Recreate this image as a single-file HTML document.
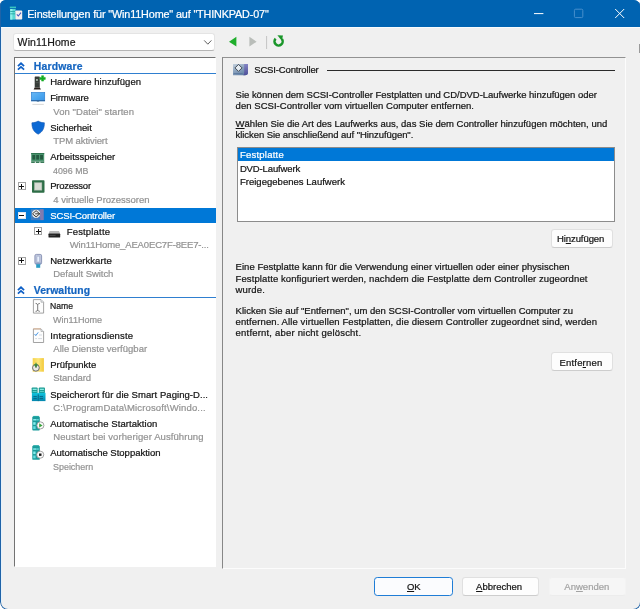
<!DOCTYPE html>
<html><head><meta charset="utf-8"><title>Einstellungen</title>
<style>
html,body{margin:0;padding:0;background:#fff;}
body{width:640px;height:609px;overflow:hidden;font-family:"Liberation Sans",sans-serif;}
#win{position:absolute;left:0;top:0;width:640.5px;height:610px;background:#f0f0f0;border-radius:5.5px 7.5px 8px 8px;overflow:hidden;}
#win>*{position:absolute;}
.t{position:absolute;white-space:pre;line-height:12px;-webkit-text-stroke:0.22px;font-family:"Liberation Sans",sans-serif;}
.t u{text-decoration:underline;text-underline-offset:1px;text-decoration-thickness:0.8px;}
#tb{left:0;top:0;width:640px;height:27.4px;background:#0063b1;}
#tbl{left:0;top:27.4px;width:640px;height:1px;background:#f8fbfd;}
#lb{left:0;top:0;width:640.5px;height:610px;box-sizing:border-box;border:1px solid #1f63a8;border-top-color:#0063b1;border-radius:5.5px 7.5px 8px 8px;z-index:5;}
#lb2{left:1px;top:28px;width:1px;height:574px;background:#e6f2fb;z-index:5;}
#combo{left:13.4px;top:32.6px;width:201.8px;height:18.6px;box-sizing:border-box;background:#fff;border:1px solid #e4e4e4;border-bottom-color:#b5b5b5;border-radius:3px;}
#tree{left:13.6px;top:57.2px;width:202.6px;height:509.6px;box-sizing:border-box;background:#fff;border-left:1.3px solid #737373;border-top:1.3px solid #737373;border-right:1px solid #fff;border-bottom:1px solid #fff;}
.hl{left:15px;width:200.8px;height:1.1px;background:#2f7fd0;}
#sel{left:15px;top:207.7px;width:200.8px;height:15.6px;background:#0078d7;}
#panel{left:222.2px;top:57.2px;width:404.2px;height:511.8px;box-sizing:border-box;border-left:1.4px solid #878787;border-top:1.5px solid #929292;border-right:1.2px solid #fcfcfc;border-bottom:1.2px solid #fcfcfc;}
#hline{left:327.4px;top:70.2px;width:287.6px;height:1.1px;background:#2a2a2a;}
#list{left:236.6px;top:146.6px;width:378.6px;height:75px;box-sizing:border-box;background:#fff;border:1.1px solid #8c8c8c;}
#lsel{left:237.8px;top:148px;width:376.2px;height:13.2px;background:#0078d7;}
.btn{box-sizing:border-box;background:#fdfdfd;border:1px solid #e0e0e0;border-bottom-color:#cdcdcd;border-radius:3.3px;}
#bok{border:1.25px solid #1f7dd6;background:#fbfcfe;}
#bapp{background:#f6f6f6;border-color:#f0f0f0 #f3f3f3 #ececec #f3f3f3;}
.pm{box-sizing:border-box;width:7.7px;height:7.7px;background:#fff;border:1px solid #a2a2a2;}
.pm i{position:absolute;background:#111;}
.pm i.h{left:0.4px;top:2.4px;width:5px;height:1.05px;}
.pm i.v{left:2.4px;top:0.4px;width:1.05px;height:5px;}
#txt{left:0;top:0;width:640px;height:609px;will-change:transform;}

</style></head>
<body>
<div id="win">
<div id="tb"></div><div id="tbl"></div><div id="lb"></div><div id="lb2"></div>
<!-- title icon -->
<svg id="ticon" style="left:8.6px;top:5.6px" width="14" height="15" viewBox="0 0 14 15">
 <rect x="0.8" y="0.6" width="6.2" height="1.6" fill="#39c6c0"/>
 <rect x="1.2" y="3" width="5.4" height="10.6" fill="#55d8d2"/>
 <rect x="1.2" y="3" width="2.2" height="10.6" fill="#8ff0ea"/>
 <rect x="1.2" y="5" width="5.4" height="0.9" fill="#2aa8a6"/>
 <rect x="1.2" y="7.4" width="5.4" height="0.9" fill="#2aa8a6"/>
 <rect x="6.4" y="4.4" width="6.8" height="9.2" rx="0.8" fill="#f6f0ee"/>
 <path d="M7.8 8.4 L9.3 10 L12 6.6" stroke="#4a5fc0" stroke-width="1.1" fill="none"/>
</svg>
<!-- caption buttons -->
<svg style="left:530px;top:5px" width="100" height="18" viewBox="0 0 100 18">
 <path d="M4 8.6 H13.4" stroke="#fff" stroke-width="1"/>
 <rect x="44.4" y="4.2" width="8.4" height="8.4" rx="1.2" fill="none" stroke="#4f94cf" stroke-width="0.9"/>
 <path d="M85.2 4 L94.2 13 M94.2 4 L85.2 13" stroke="#fff" stroke-width="1"/>
</svg>
<div id="combo"></div>
<svg style="left:203px;top:39px" width="10" height="7" viewBox="0 0 10 7"><path d="M1.2 1.4 L4.8 5.2 L8.4 1.4" fill="none" stroke="#5e5e5e" stroke-width="1"/></svg>
<!-- toolbar -->
<svg style="left:226px;top:34px" width="62" height="16" viewBox="0 0 62 16">
 <path d="M10.4 2.8 V12.6 L3 7.7 Z" fill="#1fae2b"/>
 <path d="M23.4 2.8 V12.6 L30.6 7.7 Z" fill="#b9bdb9"/>
 <path d="M40.6 2 V15" stroke="#c4c4c4" stroke-width="1"/>
 <path d="M55.9 5 A4.1 4.1 0 1 1 49.6 4.6" fill="none" stroke="#1a962a" stroke-width="2.5"/>
 <path d="M51.4 1.2 L57 1.6 L55.8 6.8 Z" fill="#1a962a"/>
</svg>
<div id="rmark" style="left:639px;top:44px;width:1px;height:8.5px;background:#9a9a9a"></div>
<div id="tree"></div>
<div class="hl" style="top:72.5px"></div>
<div class="hl" style="top:296.7px"></div>
<div id="sel"></div>
<!-- section chevrons -->
<svg style="left:17px;top:62px" width="8" height="9" viewBox="0 0 8 9"><path d="M0.9 4.1 L4 1.3 L7.1 4.1 M0.9 7.7 L4 4.9 L7.1 7.7" fill="none" stroke="#0d5fc6" stroke-width="1.75"/></svg>
<svg style="left:17px;top:285.8px" width="8" height="9" viewBox="0 0 8 9"><path d="M0.9 4.1 L4 1.3 L7.1 4.1 M0.9 7.7 L4 4.9 L7.1 7.7" fill="none" stroke="#0d5fc6" stroke-width="1.75"/></svg>
<!-- expanders -->
<div class="pm" style="left:18px;top:182.2px"><i class="h"></i><i class="v"></i></div>
<div class="pm" style="left:18px;top:211.5px;border-color:#dfe6ee"><i class="h"></i></div>
<div class="pm" style="left:34.4px;top:227.4px"><i class="h"></i><i class="v"></i></div>
<div class="pm" style="left:18px;top:257px"><i class="h"></i><i class="v"></i></div>
<!--ICONS-->
<svg id="icons" style="left:0;top:0" width="640" height="609" viewBox="0 0 640 609">
<defs>
 <linearGradient id="gmon" x1="0" y1="0" x2="1" y2="1"><stop offset="0" stop-color="#6ab8f4"/><stop offset="0.55" stop-color="#4aa6f0"/><stop offset="1" stop-color="#3a94e4"/></linearGradient>
 <linearGradient id="gscsi" x1="0" y1="0" x2="0.6" y2="1"><stop offset="0" stop-color="#c6d2de"/><stop offset="0.5" stop-color="#8da4bf"/><stop offset="1" stop-color="#6482a6"/></linearGradient>
 <linearGradient id="gscsi2" x1="0" y1="0" x2="0" y2="1"><stop offset="0" stop-color="#8584c4"/><stop offset="1" stop-color="#4d4f98"/></linearGradient>
 <linearGradient id="gyel" x1="0" y1="0" x2="1" y2="0"><stop offset="0" stop-color="#f6d24a"/><stop offset="0.5" stop-color="#fbe67a"/><stop offset="1" stop-color="#f3c93a"/></linearGradient>
 <linearGradient id="gcy" x1="0" y1="0" x2="0" y2="1"><stop offset="0" stop-color="#10c6e0"/><stop offset="1" stop-color="#0486ae"/></linearGradient>
 <linearGradient id="gdisk" x1="0" y1="0" x2="0" y2="1"><stop offset="0" stop-color="#d0d0d0"/><stop offset="0.45" stop-color="#8a8a8a"/><stop offset="0.5" stop-color="#2c2c2c"/><stop offset="1" stop-color="#1c1c1c"/></linearGradient>
</defs>
<!-- Hardware hinzufuegen: tower + green plus -->
<g>
 <rect x="34.7" y="76.5" width="5.1" height="11" rx="0.6" fill="#363c38"/>
 <rect x="36" y="79" width="1.9" height="1.9" fill="#9fb0a2"/>
 <rect x="35.6" y="82.4" width="3.2" height="0.7" fill="#565e58"/>
 <path d="M33.6 89.6 L34.6 87.5 H39.9 L40.9 89.6 Z" fill="#241c18"/>
 <path d="M41.6 75.7 h2 v1.7 h1.7 v2 h-1.7 v1.7 h-2 v-1.7 h-1.7 v-2 h1.7 Z" fill="#14ad22" stroke="#14ad22" stroke-width="0.5" stroke-linejoin="round"/>
</g>
<!-- Firmware: monitor -->
<g>
 <rect x="31.5" y="92.5" width="13.2" height="8.4" fill="url(#gmon)" stroke="#2c7fd0" stroke-width="0.7"/>
 <rect x="31.2" y="100.2" width="13.8" height="0.9" fill="#2a5f9a"/>
 <rect x="36.8" y="101.1" width="2.4" height="0.9" fill="#6e8fb0"/>
 <rect x="32.4" y="103.9" width="11.4" height="0.8" fill="#cfcfcf"/>
</g>
<!-- Sicherheit: shield -->
<path d="M38.15 121.1 C40.3 122.3 42.3 122.7 44.4 122.8 C44.5 128.3 42.6 132 38.15 134.2 C33.7 132 31.8 128.3 31.9 122.8 C34 122.7 36 122.3 38.15 121.1 Z" fill="#0c69d4" stroke="#1c5cb4" stroke-width="0.6"/>
<!-- Arbeitsspeicher: RAM -->
<g>
 <rect x="31.2" y="153" width="13" height="8.6" fill="#4d9670"/>
 <rect x="31.2" y="153" width="13" height="1.1" fill="#2f7450"/>
 <rect x="32.3" y="155" width="2.9" height="4.6" fill="#245a40"/>
 <rect x="36.2" y="155" width="2.9" height="4.6" fill="#245a40"/>
 <rect x="40.1" y="155" width="2.9" height="4.6" fill="#245a40"/>
 <path d="M31.2 161.6 h3.6 v1.3 h-3.6 Z M35.8 161.6 h3.6 v1.3 h-3.6 Z M40.4 161.6 h3.8 v1.3 h-3.8 Z" fill="#3a7a58"/>
</g>
<!-- Prozessor: CPU -->
<g>
 <rect x="32" y="180.2" width="12.5" height="12.5" rx="0.8" fill="#2e6e47"/>
 <rect x="34.6" y="182.8" width="7.2" height="7.3" fill="#d8dcd4"/>
 <rect x="34.6" y="182.8" width="7.2" height="7.3" fill="none" stroke="#b9c4b8" stroke-width="0.6"/>
</g>
<!-- SCSI controller (tree) -->
<g>
 <rect x="30.9" y="209.3" width="12.7" height="10.8" fill="#4a83c2"/>
 <rect x="39.8" y="209.3" width="3.8" height="10.8" fill="#7f7bb0"/>
 <rect x="30.9" y="217.6" width="9.4" height="2.5" fill="#3f7cc0"/>
 <circle cx="36.1" cy="213.8" r="4.15" fill="#ebebea"/>
 <path d="M32.5 213.8 L36.1 210.7 L39.7 213.8 L36.1 216.9 Z" fill="none" stroke="#2a2a2a" stroke-width="0.9"/>
 <path d="M35.2 213.8 H40.2" stroke="#2a2a2a" stroke-width="0.9"/>
</g>
<!-- Festplatte: disk -->
<g>
 <path d="M49.6 231 H59 L60.2 233.8 H48.5 Z" fill="#b9b9b9"/>
 <rect x="48.5" y="233.6" width="11.7" height="4" rx="0.7" fill="#222"/>
 <rect x="49.6" y="234.9" width="6" height="0.8" fill="#555"/>
</g>
<!-- Netzwerkkarte -->
<g>
 <rect x="34.9" y="254.4" width="6.7" height="9.8" rx="1.4" fill="#c0c7dc" stroke="#858fb2" stroke-width="0.9"/>
 <rect x="36.9" y="256.2" width="2.7" height="5.8" rx="0.6" fill="#e8f0fc" stroke="#909cc2" stroke-width="0.5"/>
 <rect x="35.6" y="262.6" width="5.3" height="1.6" fill="#8a9cc4"/>
 <rect x="36.2" y="264.2" width="4" height="3.6" fill="#2b9cc4"/>
</g>
<!-- Name: doc with I-beam -->
<g>
 <path d="M33.4 299.6 H41 L43.6 302.2 V313.1 H33.4 Z" fill="#fdfdfd" stroke="#8c8c8c" stroke-width="0.8"/>
 <path d="M41 299.6 V302.2 H43.6" fill="#e4e9ee" stroke="#9a9a9a" stroke-width="0.6"/>
 <path d="M35.6 303.4 Q37.4 303.6 37.7 304.6 Q38 303.6 39.8 303.4 M37.7 304.4 V310.4 M35.6 311.4 Q37.4 311.2 37.7 310.2 Q38 311.2 39.8 311.4" fill="none" stroke="#6a6a6a" stroke-width="0.9"/>
</g>
<!-- Integrationsdienste: doc with check -->
<g>
 <path d="M33.4 328.9 H41 L43.6 331.5 V342.5 H33.4 Z" fill="#fdfdfd" stroke="#8c8c8c" stroke-width="0.8"/>
 <path d="M33.4 328.9 H40.6" stroke="#e9b48a" stroke-width="0.8"/>
 <path d="M41 328.9 V331.5 H43.6" fill="#e4e9ee" stroke="#9a9a9a" stroke-width="0.6"/>
 <path d="M34.6 334 L35.8 335.6 L38.2 332.4" fill="none" stroke="#3f90e0" stroke-width="0.95"/>
 <path d="M39 335 H42 M35.2 338.6 H37 M38.2 338.6 H42" stroke="#c2cad4" stroke-width="0.7"/>
</g>
<!-- Pruefpunkte -->
<g>
 <rect x="32.7" y="358.1" width="11.2" height="13.6" fill="url(#gyel)"/>
 <circle cx="35.9" cy="367.8" r="3.4" fill="#e9e9e6" stroke="#666" stroke-width="0.95"/>
 <path d="M33.9 364.6 L38.1 364.6 L36 368 Z" fill="#3a8a3a"/>
 <path d="M36 362.8 V366" stroke="#3a8a3a" stroke-width="1.1"/>
 <path d="M36 368 L36 366.4" stroke="#555" stroke-width="0.6"/>
</g>
<!-- Speicherort Smart Paging -->
<g>
 <rect x="31.7" y="387.4" width="5.9" height="6" rx="0.8" fill="#17978f"/>
 <rect x="38.8" y="387.4" width="6.1" height="6" rx="0.8" fill="#17978f"/>
 <rect x="32.6" y="388.7" width="4.1" height="1.3" fill="#86ece4"/>
 <rect x="39.8" y="388.7" width="4.1" height="1.3" fill="#86ece4"/>
 <rect x="32.6" y="390.9" width="4.1" height="1" fill="#5ed6cf"/>
 <rect x="39.8" y="390.9" width="4.1" height="1" fill="#5ed6cf"/>
 <rect x="31.9" y="392.8" width="13.6" height="8.3" fill="url(#gcy)"/>
 <path d="M33.4 396.6 h3.4 M39.6 396.6 h3.4 M33.4 398.6 h3.4 M39.6 398.6 h3.4" stroke="#04617f" stroke-width="0.9"/>
 <rect x="37.6" y="394.4" width="1.4" height="6.7" fill="#0a7898"/>
</g>
<!-- Auto start -->
<g>
 <rect x="32.3" y="416.5" width="7.5" height="14" rx="0.9" fill="#1b9b9b"/>
 <rect x="33.2" y="415.9" width="5.7" height="1.2" fill="#22aaa6"/>
 <rect x="33.2" y="419" width="3.4" height="1.5" fill="#84ecec"/>
 <rect x="33.2" y="422.2" width="2.4" height="2.6" fill="#84ecec"/>
 <rect x="33.2" y="426.2" width="2.4" height="2.8" fill="#62dce0"/>
 <rect x="37" y="419" width="1.8" height="1.5" fill="#5cd4d4"/>
</g>
<circle cx="40.4" cy="425.4" r="3.55" fill="#fbfbfb" stroke="#8e8e8e" stroke-width="0.8"/>
<path d="M39.2 423.2 L42.6 425.4 L39.2 427.6 Z" fill="#3aa23c"/>
<!-- Auto stop -->
<g transform="translate(0,29.3)">
 <rect x="32.3" y="416.5" width="7.5" height="14" rx="0.9" fill="#1b9b9b"/>
 <rect x="33.2" y="415.9" width="5.7" height="1.2" fill="#22aaa6"/>
 <rect x="33.2" y="419" width="3.4" height="1.5" fill="#84ecec"/>
 <rect x="33.2" y="422.2" width="2.4" height="2.6" fill="#84ecec"/>
 <rect x="33.2" y="426.2" width="2.4" height="2.8" fill="#62dce0"/>
 <rect x="37" y="419" width="1.8" height="1.5" fill="#5cd4d4"/>
</g>
<circle cx="40.2" cy="454.7" r="3.55" fill="#fbfbfb" stroke="#8e8e8e" stroke-width="0.8"/>
<rect x="39" y="453.5" width="2.5" height="2.4" fill="#1a1a1a"/>
<!-- SCSI icon right panel -->
<g>
 <path d="M233 64 H248 V72.5 Q248 75.3 245 75.3 H233 Z" fill="url(#gscsi)"/>
 <path d="M244.2 64 H248 V72.5 Q248 75.3 245 75.3 H243.2 Q244.4 74.6 244.2 72 Z" fill="url(#gscsi2)"/>
 <path d="M238.5 64.4 L242 67.9 L238.5 71.4 L235 67.9 Z" fill="#e6edf3" stroke="#2f353d" stroke-width="0.85"/>
 <path d="M233.6 73.6 H242.6" stroke="#55729a" stroke-width="0.8"/>
</g>
</svg>

<!--/ICONS-->
<div id="panel"></div>
<div id="hline"></div>
<div id="list"></div><div id="lsel"></div>
<div class="btn" style="left:550.6px;top:229px;width:62.6px;height:18.6px"></div>
<div class="btn" style="left:550.6px;top:352.4px;width:62.6px;height:18.4px"></div>
<div class="btn" id="bok" style="left:374.4px;top:576.8px;width:78.6px;height:19px"></div>
<div class="btn" style="left:461.9px;top:577.1px;width:77.3px;height:18.6px"></div>
<div class="btn" id="bapp" style="left:549.4px;top:577.1px;width:76.6px;height:18.6px"></div>

<div id="txt">
<span class="t" id="t0" style="left:27.30px;top:8.46px;font-size:10.8px;color:#ffffff;letter-spacing:-0.136px;">Einstellungen für &quot;Win11Home&quot; auf &quot;THINKPAD-07&quot;</span>
<span class="t" id="t1" style="left:17.60px;top:36.36px;font-size:10.5px;color:#1a1a1a;letter-spacing:0.125px;">Win11Home</span>
<span class="t" id="t2" style="left:33.70px;top:61.40px;font-size:10.4px;color:#1565c0;font-weight:700;letter-spacing:0.206px;">Hardware</span>
<span class="t" id="t3" style="left:50.20px;top:76.41px;font-size:9.5px;color:#141414;letter-spacing:0.027px;">Hardware hinzufügen</span>
<span class="t" id="t4" style="left:50.20px;top:92.31px;font-size:9.5px;color:#141414;letter-spacing:-0.156px;">Firmware</span>
<span class="t" id="t5" style="left:53.30px;top:105.61px;font-size:9.5px;color:#939393;letter-spacing:0.060px;">Von &quot;Datei&quot; starten</span>
<span class="t" id="t6" style="left:50.20px;top:121.81px;font-size:9.5px;color:#141414;letter-spacing:-0.072px;">Sicherheit</span>
<span class="t" id="t7" style="left:53.30px;top:135.11px;font-size:9.5px;color:#939393;letter-spacing:-0.095px;">TPM aktiviert</span>
<span class="t" id="t8" style="left:50.20px;top:151.31px;font-size:9.5px;color:#141414;letter-spacing:-0.035px;">Arbeitsspeicher</span>
<span class="t" id="t9" style="left:53.30px;top:164.61px;font-size:9.5px;color:#939393;transform:scaleX(0.9308);transform-origin:0 0;">4096 MB</span>
<span class="t" id="t10" style="left:50.20px;top:180.46px;font-size:9.5px;color:#141414;letter-spacing:-0.233px;">Prozessor</span>
<span class="t" id="t11" style="left:53.30px;top:193.76px;font-size:9.5px;color:#939393;letter-spacing:-0.020px;">4 virtuelle Prozessoren</span>
<span class="t" id="t12" style="left:50.20px;top:209.81px;font-size:9.5px;color:#ffffff;letter-spacing:-0.109px;">SCSI-Controller</span>
<span class="t" id="t13" style="left:66.70px;top:225.71px;font-size:9.5px;color:#141414;letter-spacing:0.176px;">Festplatte</span>
<span class="t" id="t14" style="left:69.80px;top:239.01px;font-size:9.5px;color:#939393;letter-spacing:-0.143px;">Win11Home_AEA0EC7F-8EE7-...</span>
<span class="t" id="t15" style="left:50.20px;top:254.81px;font-size:9.5px;color:#141414;letter-spacing:0.065px;">Netzwerkkarte</span>
<span class="t" id="t16" style="left:53.30px;top:268.11px;font-size:9.5px;color:#939393;letter-spacing:-0.049px;">Default Switch</span>
<span class="t" id="t17" style="left:33.70px;top:285.05px;font-size:10.4px;color:#1565c0;font-weight:700;letter-spacing:0.096px;">Verwaltung</span>
<span class="t" id="t18" style="left:50.20px;top:300.21px;font-size:9.5px;color:#141414;transform:scaleX(0.9075);transform-origin:0 0;">Name</span>
<span class="t" id="t19" style="left:53.30px;top:313.51px;font-size:9.5px;color:#939393;transform:scaleX(0.9520);transform-origin:0 0;">Win11Home</span>
<span class="t" id="t20" style="left:50.20px;top:329.71px;font-size:9.5px;color:#141414;letter-spacing:0.140px;">Integrationsdienste</span>
<span class="t" id="t21" style="left:53.30px;top:343.01px;font-size:9.5px;color:#939393;letter-spacing:0.016px;">Alle Dienste verfügbar</span>
<span class="t" id="t22" style="left:50.20px;top:358.71px;font-size:9.5px;color:#141414;letter-spacing:0.011px;">Prüfpunkte</span>
<span class="t" id="t23" style="left:53.30px;top:372.01px;font-size:9.5px;color:#939393;letter-spacing:-0.109px;">Standard</span>
<span class="t" id="t24" style="left:50.20px;top:388.71px;font-size:9.5px;color:#141414;letter-spacing:0.057px;">Speicherort für die Smart Paging-D...</span>
<span class="t" id="t25" style="left:53.30px;top:402.01px;font-size:9.5px;color:#939393;letter-spacing:0.156px;">C:\ProgramData\Microsoft\Windo...</span>
<span class="t" id="t26" style="left:50.20px;top:417.71px;font-size:9.5px;color:#141414;letter-spacing:0.069px;">Automatische Startaktion</span>
<span class="t" id="t27" style="left:53.30px;top:431.01px;font-size:9.5px;color:#939393;letter-spacing:0.087px;">Neustart bei vorheriger Ausführung</span>
<span class="t" id="t28" style="left:50.20px;top:447.21px;font-size:9.5px;color:#141414;letter-spacing:-0.003px;">Automatische Stoppaktion</span>
<span class="t" id="t29" style="left:53.30px;top:460.51px;font-size:9.5px;color:#939393;transform:scaleX(0.9397);transform-origin:0 0;">Speichern</span>
<span class="t" id="t30" style="left:254.20px;top:64.46px;font-size:9.5px;color:#141414;letter-spacing:-0.142px;">SCSI-Controller</span>
<span class="t" id="t31" style="left:235.60px;top:88.71px;font-size:9.5px;color:#141414;letter-spacing:-0.018px;">Sie können dem SCSI-Controller Festplatten und CD/DVD-Laufwerke hinzufügen oder</span>
<span class="t" id="t32" style="left:235.60px;top:99.51px;font-size:9.5px;color:#141414;letter-spacing:0.045px;">den SCSI-Controller vom virtuellen Computer entfernen.</span>
<span class="t" id="t33" style="left:235.60px;top:117.71px;font-size:9.5px;color:#141414;letter-spacing:0.005px;"><u>W</u>ählen Sie die Art des Laufwerks aus, das Sie dem Controller hinzufügen möchten, und</span>
<span class="t" id="t34" style="left:235.60px;top:128.71px;font-size:9.5px;color:#141414;letter-spacing:-0.068px;">klicken Sie anschließend auf &quot;Hinzufügen&quot;.</span>
<span class="t" id="t35" style="left:239.90px;top:149.46px;font-size:9.5px;color:#ffffff;letter-spacing:0.237px;">Festplatte</span>
<span class="t" id="t36" style="left:239.90px;top:162.61px;font-size:9.5px;color:#141414;letter-spacing:-0.130px;">DVD-Laufwerk</span>
<span class="t" id="t37" style="left:239.90px;top:176.11px;font-size:9.5px;color:#141414;letter-spacing:0.025px;">Freigegebenes Laufwerk</span>
<span class="t" id="t38" style="left:556.90px;top:233.21px;font-size:9.5px;color:#141414;letter-spacing:-0.066px;">Hi<u>n</u>zufügen</span>
<span class="t" id="t39" style="left:235.60px;top:261.31px;font-size:9.5px;color:#141414;letter-spacing:0.036px;">Eine Festplatte kann für die Verwendung einer virtuellen oder einer physischen</span>
<span class="t" id="t40" style="left:235.60px;top:272.71px;font-size:9.5px;color:#141414;letter-spacing:0.095px;">Festplatte konfiguriert werden, nachdem die Festplatte dem Controller zugeordnet</span>
<span class="t" id="t41" style="left:235.60px;top:284.01px;font-size:9.5px;color:#141414;letter-spacing:0.137px;">wurde.</span>
<span class="t" id="t42" style="left:235.60px;top:305.11px;font-size:9.5px;color:#141414;letter-spacing:-0.005px;">Klicken Sie auf &quot;Entfernen&quot;, um den SCSI-Controller vom virtuellen Computer zu</span>
<span class="t" id="t43" style="left:235.60px;top:316.11px;font-size:9.5px;color:#141414;letter-spacing:0.103px;">entfernen. Alle virtuellen Festplatten, die diesem Controller zugeordnet sind, werden</span>
<span class="t" id="t44" style="left:235.60px;top:327.31px;font-size:9.5px;color:#141414;letter-spacing:0.193px;">entfernt, aber nicht gelöscht.</span>
<span class="t" id="t45" style="left:559.50px;top:356.71px;font-size:9.5px;color:#141414;letter-spacing:0.185px;">Entfe<u>r</u>nen</span>
<span class="t" id="t46" style="left:407.00px;top:580.71px;font-size:9.5px;color:#141414;letter-spacing:-0.234px;"><u>O</u>K</span>
<span class="t" id="t47" style="left:476.10px;top:580.71px;font-size:9.5px;color:#141414;letter-spacing:0.004px;"><u>A</u>bbrechen</span>
<span class="t" id="t48" style="left:564.30px;top:580.71px;font-size:9.5px;color:#a3a3a3;letter-spacing:0.025px;">An<u>w</u>enden</span>
</div>
</div>
</body></html>
